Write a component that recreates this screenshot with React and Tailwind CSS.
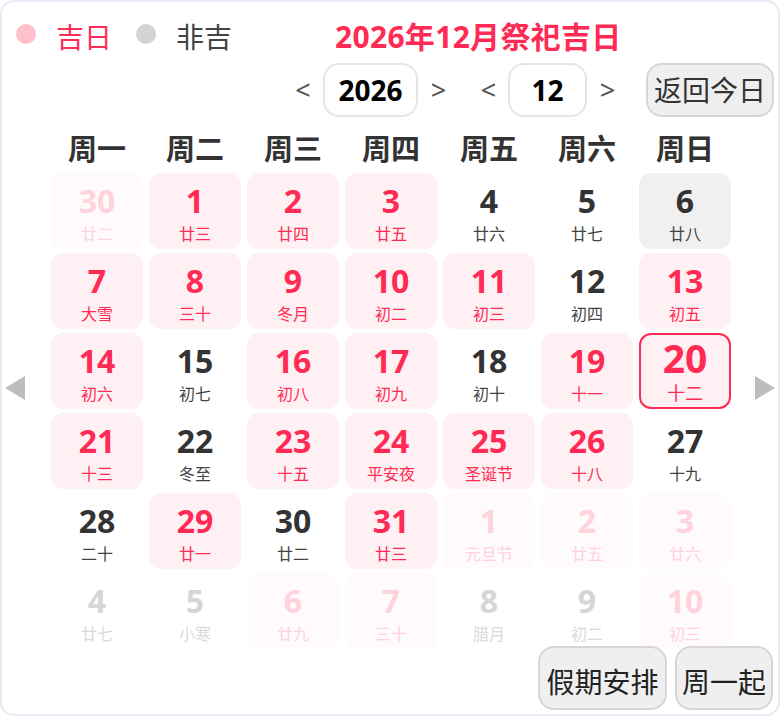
const RED = 'text-[#ff2b54]'

// type: good | normal | gray | today | fadeGood | fadeNormal
const weeks = [
  [[30, '廿二', 'fadeGood'], [1, '廿三', 'good'], [2, '廿四', 'good'], [3, '廿五', 'good'], [4, '廿六', 'normal'], [5, '廿七', 'normal'], [6, '廿八', 'gray']],
  [[7, '大雪', 'good'], [8, '三十', 'good'], [9, '冬月', 'good'], [10, '初二', 'good'], [11, '初三', 'good'], [12, '初四', 'normal'], [13, '初五', 'good']],
  [[14, '初六', 'good'], [15, '初七', 'normal'], [16, '初八', 'good'], [17, '初九', 'good'], [18, '初十', 'normal'], [19, '十一', 'good'], [20, '十二', 'today']],
  [[21, '十三', 'good'], [22, '冬至', 'normal'], [23, '十五', 'good'], [24, '平安夜', 'good'], [25, '圣诞节', 'good'], [26, '十八', 'good'], [27, '十九', 'normal']],
  [[28, '二十', 'normal'], [29, '廿一', 'good'], [30, '廿二', 'normal'], [31, '廿三', 'good'], [1, '元旦节', 'fadeGood'], [2, '廿五', 'fadeGood'], [3, '廿六', 'fadeGood']],
  [[4, '廿七', 'fadeNormal'], [5, '小寒', 'fadeNormal'], [6, '廿九', 'fadeGood'], [7, '三十', 'fadeGood'], [8, '腊月', 'fadeNormal'], [9, '初二', 'fadeNormal'], [10, '初三', 'fadeGood']],
]

const weekNames = ['周一', '周二', '周三', '周四', '周五', '周六', '周日']

const styles = {
  good: { box: 'bg-[#fff0f3]', num: RED, lunar: RED },
  normal: { box: '', num: 'text-[#333]', lunar: 'text-[#444]' },
  gray: { box: 'bg-[#f0f0f0]', num: 'text-[#333]', lunar: 'text-[#444]' },
  fadeGood: { box: 'bg-[#fffafb]', num: 'text-[#ffd3dc]', lunar: 'text-[#ffd3dc]' },
  fadeNormal: { box: '', num: 'text-[#d6d6d6]', lunar: 'text-[#dadada]' },
}

const DayCell = ({ num, lunar, type }) => {
  if (type === 'today') {
    return (
      <div className="h-[76px] rounded-[12px] border-2 border-[#ff2b54] bg-[#fff0f3] flex flex-col items-center pt-[3px]">
        <span className={`text-[39px] leading-[40px] font-bold ${RED}`}>{num}</span>
        <span className={`text-[18px] leading-[18px] mt-[6px] ${RED}`}>{lunar}</span>
      </div>
    )
  }
  const s = styles[type]
  return (
    <div className={`h-[76px] rounded-[12px] flex flex-col items-center pt-[9px] ${s.box}`}>
      <span className={`text-[32px] leading-[38px] font-bold ${s.num}`}>{num}</span>
      <span className={`text-[16px] leading-[20px] mt-[4px] ${s.lunar}`}>{lunar}</span>
    </div>
  )
}

const Triangle = ({ dir }) => (
  <svg width="20" height="24" viewBox="0 0 20 24">
    {dir === 'left'
      ? <polygon points="20,0 20,24 0,12" fill="#bdbdbd" />
      : <polygon points="0,0 0,24 20,12" fill="#bdbdbd" />}
  </svg>
)

const App = () => {
  return (
    <div
      className="w-[780px] h-[716px] bg-white border-2 border-[#e8ebf6] rounded-[14px] pt-[12px] overflow-hidden"
      style={{ fontFamily: '"Noto Sans", "Noto Sans CJK SC", sans-serif' }}
    >
      {/* legend + title */}
      <div className="h-[46px] flex items-center pl-[14px]">
        <span className="w-5 h-5 rounded-full bg-[#ffc0cb] -mt-[6px]" />
        <span className="ml-[20px] text-[28px] text-[#ff2d55] leading-none">吉日</span>
        <span className="ml-[24px] w-5 h-5 rounded-full bg-[#d3d3d3] -mt-[6px]" />
        <span className="ml-[20px] text-[28px] text-[#444] leading-none">非吉</span>
        <span className={`ml-[103px] text-[30px] font-bold leading-none tracking-[0.3px] ${RED}`}>2026年12月祭祀吉日</span>
      </div>

      {/* year / month selectors */}
      <div className="mt-[3px] h-[54px] flex items-center pl-[281px]">
        <span className="w-[40px] text-center text-[27px] text-[#555]">&lt;</span>
        <div className="w-[95px] h-[54px] rounded-[16px] border-2 border-[#e6e6e6] flex items-center justify-center text-[28px] font-bold text-black">2026</div>
        <span className="w-[41px] text-center text-[27px] text-[#555]">&gt;</span>
        <span className="ml-[10px] w-[39px] text-center text-[27px] text-[#555]">&lt;</span>
        <div className="w-[79px] h-[54px] rounded-[16px] border-2 border-[#e6e6e6] flex items-center justify-center text-[28px] font-bold text-black">12</div>
        <span className="w-[41px] text-center text-[27px] text-[#555]">&gt;</span>
        <button className="ml-[18px] w-[128px] h-[54px] rounded-[16px] border-2 border-[#d6d6d6] bg-[#efefef] text-[28px] text-[#333] leading-none">返回今日</button>
      </div>

      {/* calendar body */}
      <div className="flex items-center mt-[9px]">
        <div className="w-[49px] pl-[3px] flex">
          <Triangle dir="left" />
        </div>
        <div className="w-[680px]">
          <div className="h-[44px] grid grid-cols-7 gap-x-[6px] items-center">
            {weekNames.map((w) => (
              <div key={w} className="text-center text-[29px] font-bold text-[#333] leading-none">{w}</div>
            ))}
          </div>
          <div className="mt-[3px] grid grid-cols-7 gap-x-[6px] gap-y-[4px]">
            {weeks.flat().map(([num, lunar, type], i) => (
              <DayCell key={i} num={num} lunar={lunar} type={type} />
            ))}
          </div>
        </div>
        <div className="pl-[24px] flex">
          <Triangle dir="right" />
        </div>
      </div>

      {/* footer buttons */}
      <div className="-mt-[3px] flex justify-end gap-[8px] pr-[5px]">
        <button className="w-[129px] h-[64px] rounded-[16px] border-2 border-[#d6d6d6] bg-[#efefef] text-[28px] text-[#222] pt-[8px]">假期安排</button>
        <button className="w-[98px] h-[64px] rounded-[16px] border-2 border-[#d6d6d6] bg-[#efefef] text-[28px] text-[#222] pt-[8px]">周一起</button>
      </div>
    </div>
  )
}

export default App
